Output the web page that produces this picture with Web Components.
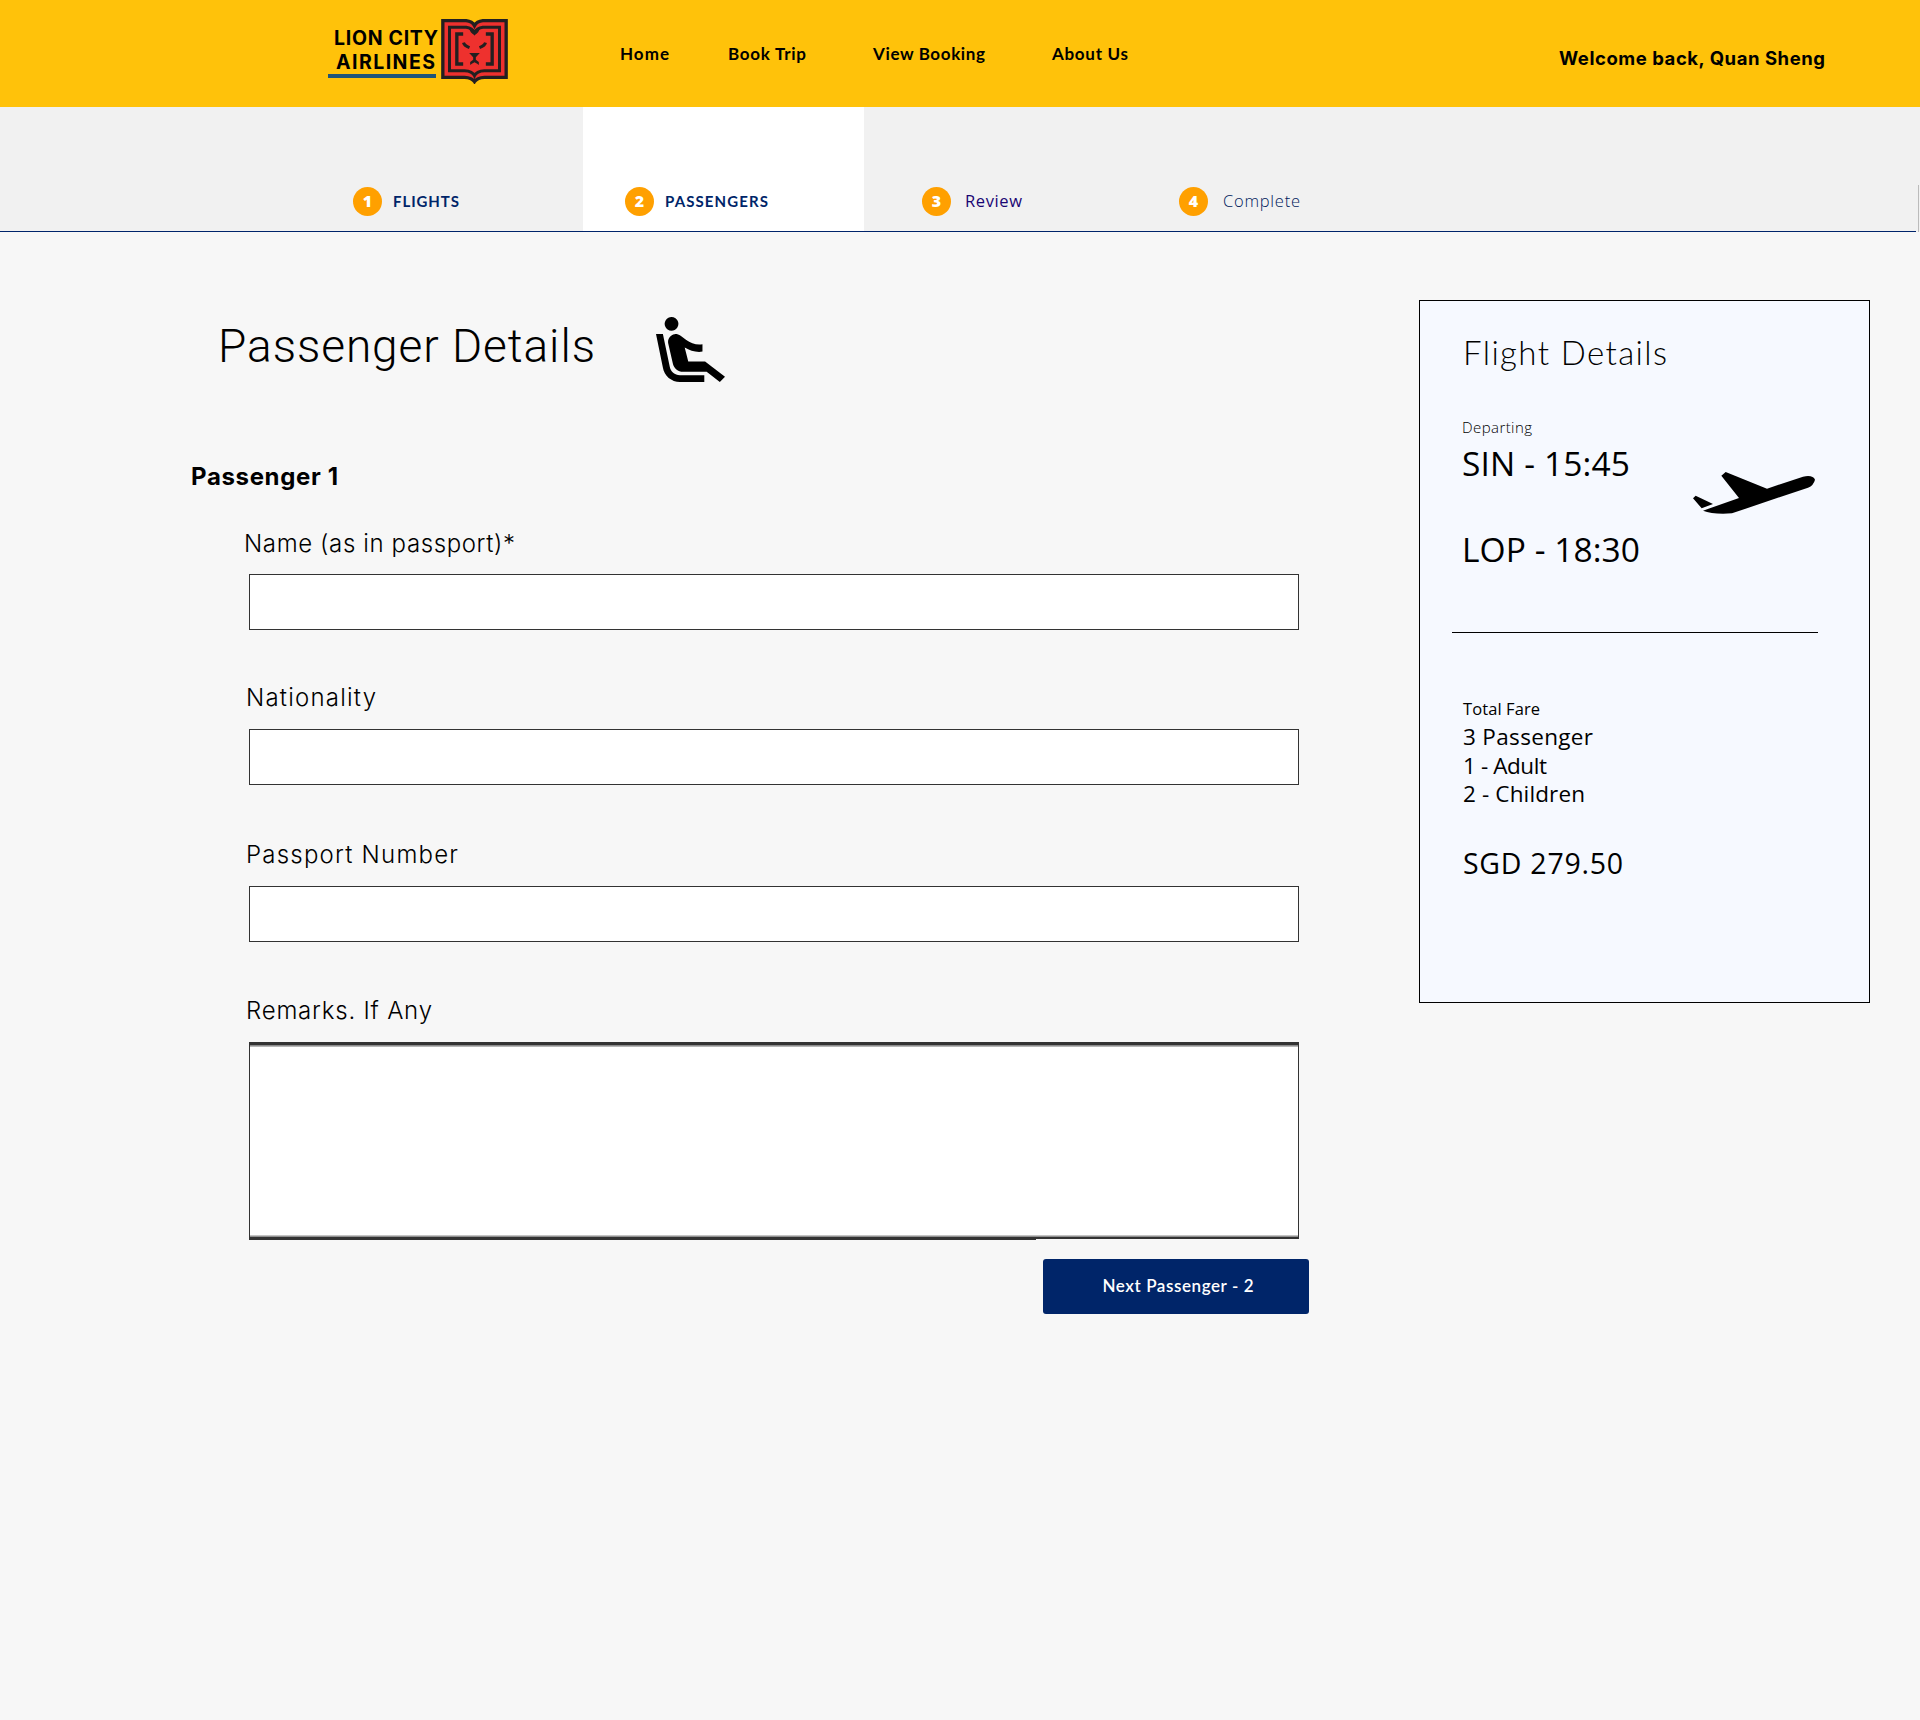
<!DOCTYPE html>
<html lang="en">
<head>
<meta charset="utf-8">
<title>Lion City Airlines - Passenger Details</title>
<style>
html,body{margin:0;background:#f7f7f7;color:#000;font-family:Lato,sans-serif}
body{width:1920px;height:1720px;overflow:hidden}
</style>
</head>
<body>
<booking-page></booking-page>
<script>
const define=(name,html,setup)=>customElements.define(name,class extends HTMLElement{
  connectedCallback(){
    if(this.shadowRoot)return;
    const t=document.createElement('template');t.innerHTML=html;
    this.attachShadow({mode:'open'}).append(t.content.cloneNode(true));
    if(setup)setup(this,this.shadowRoot);
  }
});

/* One line of text. Its box runs from cap height to baseline; letters are tracked to the given width. */
const faces={
  lato:['Lato',.7165,.387,0],
  inter:['Inter',.727,.364,1],
  open:['"Open Sans"',.714,.388,1],
  roboto:['Roboto',.711,.342,0]
};
define('type-line',`<style>
:host{display:flex;align-items:flex-start;flex:none;white-space:nowrap}
span{display:block;line-height:1}
</style><span><slot></slot></span>`,(el,root)=>{
  const [family,cap,mid,drop]=faces[el.getAttribute('face')||'lato'];
  const size=+el.getAttribute('size'),w=+el.getAttribute('w');
  const s=root.querySelector('span');
  el.style.fontFamily=family+',sans-serif';
  el.style.fontSize=size+'px';
  el.style.fontWeight=el.getAttribute('weight')||400;
  el.style.height=Math.round(cap*size)+'px';
  s.style.marginTop=(Math.round(cap*size)-size*(.5+mid)+(size>19?drop:0))+'px';
  if(w){
    el.style.width=w+'px';
    s.style.letterSpacing=(w-s.getBoundingClientRect().width)/(el.textContent.length-1)+'px';
  }
});

define('brand-logo',`<style>
:host{display:flex;flex:none}
.words{width:108px;padding-top:31px;margin-right:5px}
.l1{margin-left:6px}.l2{margin:10px 0 5px 8px}
.bar{height:4px;background:#1f5579}
svg{display:block;margin-top:19px}
</style>
<div class="words"><type-line class="l1" face="inter" size="19.5" weight="700" w="104">LION CITY</type-line>
<type-line class="l2" face="inter" size="19.5" weight="700" w="99">AIRLINES</type-line><div class="bar"></div></div>
<svg width="67" height="65" viewBox="0 0 200 195" fill="none" stroke="#231f20" stroke-width="9">
<path fill="#ee312e" stroke-width="10" d="M5 5H75Q93 7 100 20Q107 7 125 5H195V175H130Q108 176 100 188Q92 176 70 175H5Z"/>
<path d="M25 25H75Q93 28 100 41Q107 28 125 25H175V155H130Q106 156 100 170Q94 156 70 155H25Z"/>
<path fill="#231f20" stroke="none" d="M84 27Q100 30 100 38Q100 30 116 27Q114 42 100 48Q86 42 84 27Z"/>
<path stroke-width="10" d="M66 45H47V135H66M134 45H153V135H134"/>
<path stroke-width="9" d="M67 71Q69 80 85 86M133 71Q131 80 115 86"/>
<path fill="#231f20" stroke="none" d="M84 102H116L104 115V122L113 129V138L108 134L100 130L92 134L87 138V129L96 122V115Z"/>
</svg>`);

define('site-header',`<style>
:host{display:flex;height:107px;background:#ffc20a;box-sizing:border-box;padding-left:328px}
nav{display:flex;padding-top:48px;margin-left:112px}
nav type-line+type-line{margin-left:var(--gap)}
.user{margin:52px 0 0 431px}
</style>
<brand-logo></brand-logo>
<nav>
<type-line size="17" weight="700" w="49">Home</type-line>
<type-line size="17" weight="700" w="78" style="--gap:59px">Book Trip</type-line>
<type-line size="17" weight="700" w="112" style="--gap:67px">View Booking</type-line>
<type-line size="17" weight="700" w="76" style="--gap:67px">About Us</type-line>
</nav>
<type-line class="user" face="inter" size="18.5" weight="700" w="266">Welcome back, Quan Sheng</type-line>`);

define('step-item',`<style>
:host{display:flex;align-items:center;flex:none;height:29px}
.dot{width:29px;height:29px;border-radius:50%;background:#ffa000;color:#fff;flex:none;display:flex;align-items:center;justify-content:center;font:800 16px/29px "Open Sans",sans-serif}
.label{margin-left:var(--label-gap,11px);color:var(--label,#002569)}
</style><div class="dot"></div><div class="label"><slot></slot></div>`,(el,root)=>{root.querySelector('.dot').textContent=el.getAttribute('n')});

define('booking-steps',`<style>
:host{display:flex;height:125px}
.track{width:1916px;display:flex;background:#f1f1f1;border-bottom:1px solid #00246b;box-sizing:border-box}
.cell{box-sizing:border-box;padding-top:80px;flex:none}
.edge{width:4px;background:#f1f1f1;display:flex;justify-content:flex-end;align-items:flex-end}
.edge i{width:1px;height:47px;background:#bbb;margin-right:1px}
</style>
<div class="track">
<div class="cell" style="width:583px;padding-left:353px"><step-item n="1"><type-line size="15" weight="700" w="66">FLIGHTS</type-line></step-item></div>
<div class="cell" style="width:281px;padding-left:42px;background:#fff"><step-item n="2"><type-line size="15" weight="700" w="103">PASSENGERS</type-line></step-item></div>
<div class="cell" style="width:315px;padding-left:58px"><step-item n="3" style="--label:#1a0674;--label-gap:14px"><type-line face="open" size="16.5" w="57" style="margin-top:1px">Review</type-line></step-item></div>
<div class="cell"><step-item n="4" style="--label:#001a5c;--label-gap:15px"><type-line face="open" size="16.5" weight="300" w="77">Complete</type-line></step-item></div>
</div><div class="edge"><i></i></div>`);

define('form-field',`<style>
:host{display:block}
input,.area{display:block;box-sizing:border-box;width:1050px;margin:0 0 0 57px;background:#fff;border:1px solid #333;border-radius:0;padding:0 12px;font:20px Lato,sans-serif;outline:0}
input{height:56px}
.area{height:197px;resize:none;border-width:3px 1px 2px;background:linear-gradient(#777,#ccc) top/100% 2px no-repeat,linear-gradient(#ddd,#777) bottom/100% 2px no-repeat,#fff}
.lip{width:787px;height:1px;margin-left:57px;background:#333}
slot{display:block;margin:0 0 var(--drop,22px) var(--indent,54px)}
</style><slot></slot>`,(el,root)=>{
  if(el.hasAttribute('multiline')){
    const a=document.createElement('textarea');a.className='area';
    const lip=document.createElement('div');lip.className='lip';
    root.append(a,lip);
  }else root.append(document.createElement('input'));
});

define('passenger-form',`<style>
:host{display:block;width:1419px;padding-left:191px;box-sizing:border-box;flex:none}
.title{display:flex;padding:85px 0 0 27px}
.title type-line{margin-top:12px}
.title svg{display:block;margin-left:61px}
.who{margin-top:86px}
.fields{margin:50px 0 0 1px}
form-field+form-field{margin-top:var(--top)}
button{display:flex;align-items:center;justify-content:center;width:266px;height:55px;margin:19px 0 0 852px;padding:0 0 0 4px;border:0;border-radius:3px;background:#002569;color:#fff}
</style>
<div class="title"><type-line face="roboto" size="46" weight="300" w="377">Passenger Details</type-line>
<svg width="69" height="65" viewBox="2 2 20 19" preserveAspectRatio="none"><path d="M5.35 5.64c-.9-.64-1.12-1.88-.49-2.79.63-.9 1.88-1.12 2.79-.49.9.64 1.12 1.88.49 2.79-.64.9-1.88 1.12-2.79.49zM16 19H8.93c-1.48 0-2.74-1.08-2.96-2.54L4 7H2l1.99 9.76C4.37 19.2 6.47 21 8.94 21H16v-2zm.23-4h-4.88l-1.03-4.1c1.58.89 3.28 1.54 5.15 1.22V9.99c-1.63.31-3.44-.27-4.69-1.25L9.14 7.47c-.23-.18-.49-.3-.76-.38-.32-.09-.66-.12-.99-.06h-.02c-1.23.22-2.05 1.39-1.84 2.61l1.35 5.92C7.16 16.98 8.39 18 9.83 18h6.85l3.82 3 1.5-1.5-5.77-4.5z"/></svg></div>
<type-line class="who" face="inter" size="24" weight="700" w="147">Passenger 1</type-line>
<div class="fields">
<form-field style="--indent:52px"><type-line face="inter" size="24" weight="300" w="271">Name (as in passport)*</type-line></form-field>
<form-field style="--top:59px;--drop:23px"><type-line face="inter" size="24" weight="300" w="130">Nationality</type-line></form-field>
<form-field style="--top:61px;--drop:23px"><type-line face="inter" size="24" weight="300" w="212">Passport Number</type-line></form-field>
<form-field multiline style="--top:60px;--drop:23px"><type-line face="inter" size="24" weight="300" w="186">Remarks. If Any</type-line></form-field>
</div>
<button><type-line size="17" weight="600" w="151">Next Passenger - 2</type-line></button>`);

define('flight-card',`<style>
:host{display:block;box-sizing:border-box;width:451px;height:703px;margin-top:68px;border:1px solid #000;background:#f6f9ff;padding:40px 0 0 43px;flex:none}
.leg{display:flex}
svg{display:block;margin:-4px 0 0 53px}
hr{width:366px;height:1px;border:0;margin:70px 0 71px -11px;background:#000}
</style>
<type-line size="33" weight="300" w="204">Flight Details</type-line>
<type-line face="open" size="15" weight="300" w="70" style="margin:57px 0 0 -1px">Departing</type-line>
<type-line face="open" size="33.5" w="168" style="margin:19px 0 0 -1px">SIN - 15:45</type-line>
<div class="leg"><type-line face="open" size="33.5" w="178" style="margin:62px 0 0 -1px">LOP - 18:30</type-line>
<svg width="122" height="42" viewBox="0 0 366 126"><path d="M85 11L98 0L222 50L330 14Q360 8 366 23Q362 40 345 47L117 124Q60 128 30 116L138 78ZM0 79L8 71L60 96L26 109Z"/></svg></div>
<hr>
<type-line face="open" size="16.5" w="77">Total Fare</type-line>
<type-line face="open" size="22.5" w="130" style="margin-top:13px">3 Passenger</type-line>
<type-line face="open" size="22.5" w="84" style="margin-top:13px">1 - Adult</type-line>
<type-line face="open" size="22.5" w="122" style="margin-top:12px">2 - Children</type-line>
<type-line face="open" size="28.5" w="160" style="margin-top:51px">SGD 279.50</type-line>`);

define('booking-page',`<style>
:host{display:block}
main{display:flex;align-items:flex-start}
</style><site-header></site-header><booking-steps></booking-steps><main><passenger-form></passenger-form><flight-card></flight-card></main>`);
</script>
</body>
</html>
